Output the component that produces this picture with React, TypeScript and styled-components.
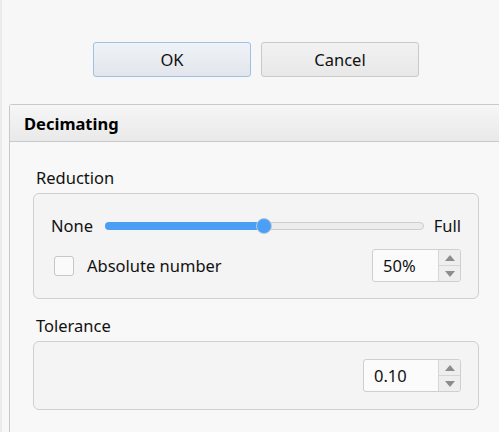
import React from 'react'
import styled, { createGlobalStyle } from 'styled-components'

const LookAndFeel = createGlobalStyle`
  html, body {
    margin: 0;
    padding: 0;
    background: #f7f7f7;
    overflow: hidden;
  }
  body {
    font-family: "Noto Sans", "Open Sans", sans-serif;
    font-size: 16.5px;
    color: #111;
  }
`

const Page = styled.div`
  display: flex;
  height: 432px;
`

const Strip = styled.div`
  width: 2px;
  background: #ebebeb;
`

const Content = styled.div`
  flex: 1;
  display: flex;
  flex-direction: column;
  min-width: 0;
`

const ButtonBar = styled.div`
  display: flex;
  gap: 10px;
  padding: 42px 0 0 91px;
`

const Button = styled.button<{ $default?: boolean }>`
  box-sizing: border-box;
  width: 158px;
  height: 35px;
  border-radius: 3px;
  font: inherit;
  color: #111;
  border: 1px solid ${p => (p.$default ? '#9cc0e6' : '#c9c9c9')};
  background: ${p =>
    p.$default
      ? 'linear-gradient(#eff2f6, #e2e6ec)'
      : 'linear-gradient(#f2f2f2, #e8e8e8)'};
`

const Panel = styled.div`
  margin: 27px -10px 0 7px;
  flex: 1;
  border: 1px solid #c9c9c9;
  border-bottom: none;
  border-radius: 3px 0 0 0;
  display: flex;
  flex-direction: column;
`

const PanelHeader = styled.div`
  height: 36px;
  border-bottom: 1px solid #c9c9c9;
  background: linear-gradient(#f6f6f6, #e9e9e9);
  display: flex;
  align-items: center;
  padding-left: 14px;
  font-weight: bold;
  color: #000;
`

const PanelBody = styled.div`
  padding: 26px 30px 0 23px;
  background: #f8f8f8;
  flex: 1;
`

const Label = styled.div`
  line-height: 20px;
  height: 20px;
  padding-left: 3px;
  margin-bottom: 5px;
`

const Group = styled.div<{ $mb?: number }>`
  box-sizing: border-box;
  width: 446px;
  border: 1px solid #d0d0d0;
  border-radius: 6px;
  background: #f4f4f4;
  margin-bottom: ${p => p.$mb ?? 0}px;
`

const ReductionGroup = styled(Group)`
  padding: 22px 17px 16px 17px;
  display: flex;
  flex-direction: column;
  gap: 13px;
`

const ToleranceGroup = styled(Group)`
  height: 69px;
  padding: 0 17px;
  display: flex;
  align-items: center;
  justify-content: flex-end;
`

const SliderRow = styled.div`
  display: flex;
  align-items: center;
  height: 20px;
`

const SliderText = styled.span`
  line-height: 20px;
`

const Track = styled.div`
  position: relative;
  flex: 1;
  height: 8px;
  margin: 0 10px 0 12px;
  box-sizing: border-box;
  border: 1px solid #cdcdcd;
  border-radius: 4px;
  background: #ececec;
`

const Fill = styled.div`
  position: absolute;
  left: -1px;
  top: -1px;
  height: 8px;
  border-radius: 4px 0 0 4px;
  background: #4a9ff5;
`

const Thumb = styled.div`
  position: absolute;
  top: 50%;
  width: 16px;
  height: 16px;
  margin: -8px 0 0 -8px;
  box-sizing: border-box;
  border-radius: 50%;
  border: 1px solid #c0c8d2;
  background: #4aa0f7;
`

const OptionRow = styled.div`
  display: flex;
  align-items: center;
  height: 33px;
`

const CheckBox = styled.span`
  box-sizing: border-box;
  width: 20px;
  height: 20px;
  margin-left: 3px;
  border: 1px solid #c6c6c6;
  border-radius: 3px;
  background: #fafafa;
`

const CheckText = styled.span`
  margin-left: 13px;
  flex: 1;
`

const Spinner = styled.div<{ $width: number }>`
  box-sizing: border-box;
  width: ${p => p.$width}px;
  height: 33px;
  display: flex;
  border: 1px solid #cfcfcf;
  border-radius: 3px;
  background: #fbfbfb;
  overflow: hidden;
`

const SpinValue = styled.div`
  flex: 1;
  display: flex;
  align-items: center;
  padding-left: 10px;
`

const SpinArrows = styled.div`
  width: 21px;
  border-left: 1px solid #d6d6d6;
  display: flex;
  flex-direction: column;
  background: #eeeeee;
`

const SpinArrow = styled.div<{ $down?: boolean }>`
  flex: 1;
  display: flex;
  align-items: center;
  justify-content: center;
  border-top: ${p => (p.$down ? '1px solid #d6d6d6' : 'none')};
`

const Triangle = styled.span<{ $down?: boolean }>`
  width: 0;
  height: 0;
  border-left: 5px solid transparent;
  border-right: 5px solid transparent;
  ${p => (p.$down ? 'border-top: 6px solid #8c8c8c;' : 'border-bottom: 6px solid #8c8c8c;')}
`

const NumberSpinner = ({ value, width }: { value: string; width: number }) => (
  <Spinner $width={width}>
    <SpinValue>{value}</SpinValue>
    <SpinArrows>
      <SpinArrow>
        <Triangle />
      </SpinArrow>
      <SpinArrow $down>
        <Triangle $down />
      </SpinArrow>
    </SpinArrows>
  </Spinner>
)

const App = () => {
  const reduction = 0.5

  return (
    <Page>
      <LookAndFeel />
      <Strip />
      <Content>
        <ButtonBar>
          <Button $default>OK</Button>
          <Button>Cancel</Button>
        </ButtonBar>
        <Panel>
          <PanelHeader>Decimating</PanelHeader>
          <PanelBody>
            <Label>Reduction</Label>
            <ReductionGroup $mb={17}>
              <SliderRow>
                <SliderText>None</SliderText>
                <Track>
                  <Fill style={{ width: `${reduction * 100}%` }} />
                  <Thumb style={{ left: `${reduction * 100}%` }} />
                </Track>
                <SliderText>Full</SliderText>
              </SliderRow>
              <OptionRow>
                <CheckBox />
                <CheckText>Absolute number</CheckText>
                <NumberSpinner value="50%" width={89} />
              </OptionRow>
            </ReductionGroup>
            <Label>Tolerance</Label>
            <ToleranceGroup>
              <NumberSpinner value="0.10" width={98} />
            </ToleranceGroup>
          </PanelBody>
        </Panel>
      </Content>
    </Page>
  )
}

export default App
